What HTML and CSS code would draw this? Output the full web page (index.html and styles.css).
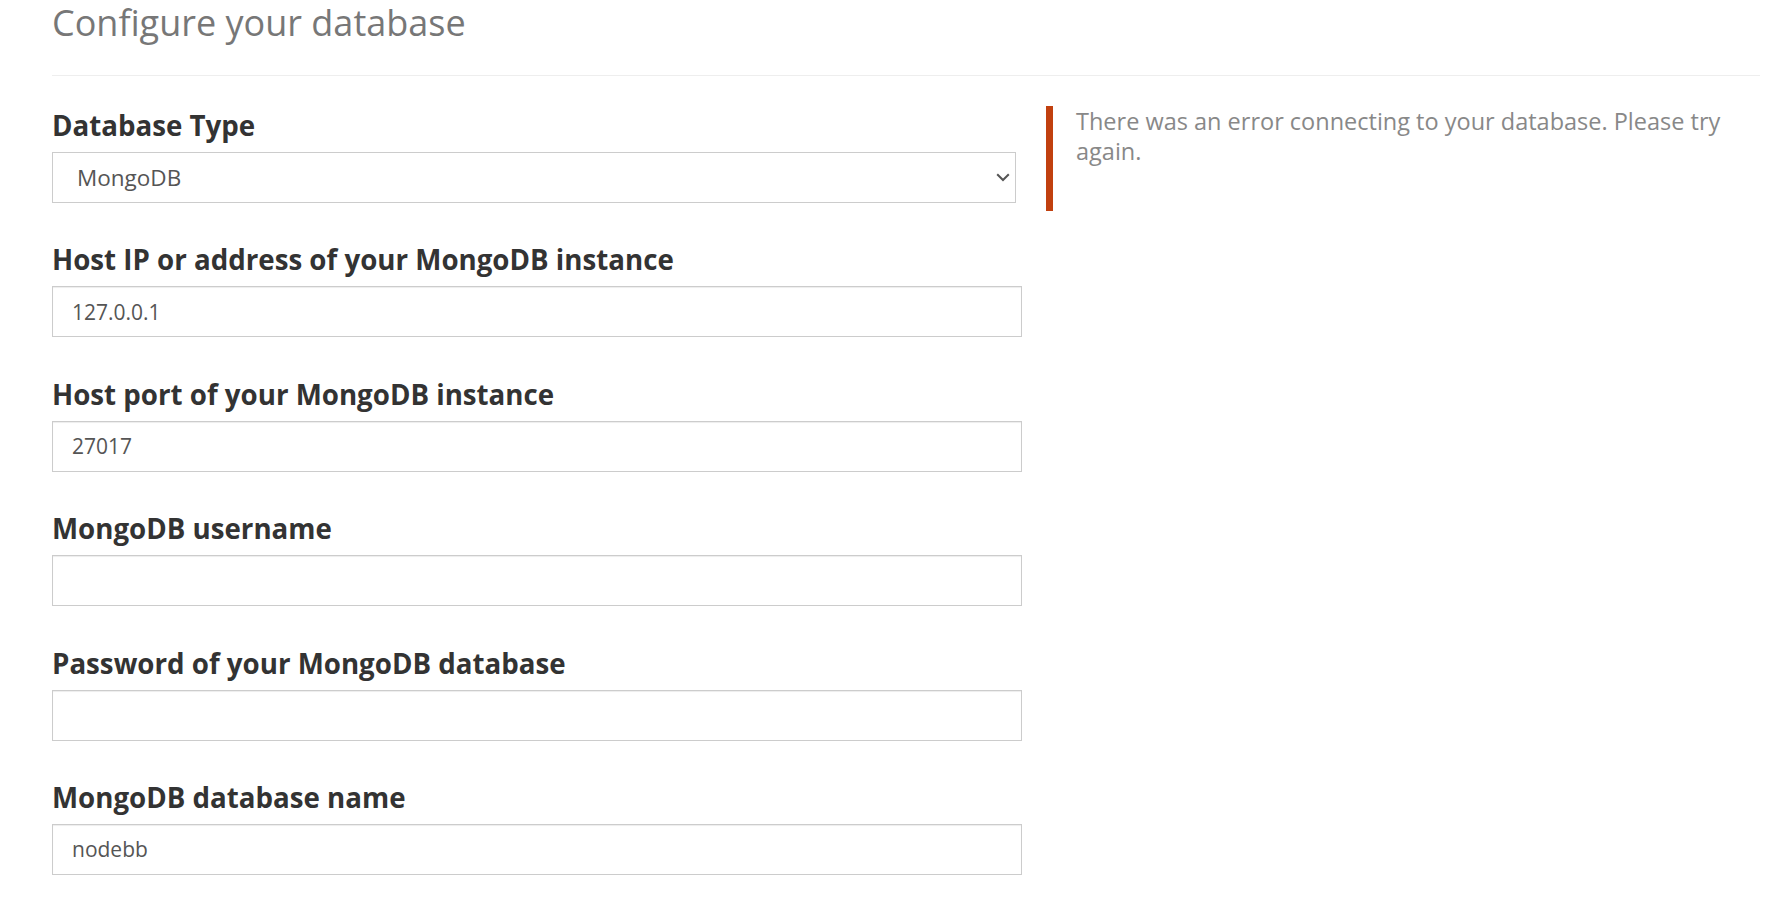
FILE: index.html
```html
<!DOCTYPE html>
<html lang="en">
<head>
<meta charset="utf-8">
<title>Configure your database</title>
<link rel="stylesheet" href="styles.css">
</head>
<body>
<div class="page">
  <h1 class="title">Configure your database</h1>
  <hr class="divider">
  <div class="layout">
    <form class="form">
      <div class="form-group">
        <label class="label" for="dbtype">Database Type</label>
        <div class="select-wrap">
          <select id="dbtype" class="control select">
            <option>MongoDB</option>
          </select>
          <svg class="chevron" width="14" height="9" viewBox="0 0 14 9" aria-hidden="true"><path d="M1.2 1.2 L7 7 L12.8 1.2" fill="none" stroke="#555" stroke-width="2"/></svg>
        </div>
      </div>
      <div class="form-group">
        <label class="label" for="host">Host IP or address of your MongoDB instance</label>
        <input id="host" class="control" type="text" value="127.0.0.1">
      </div>
      <div class="form-group">
        <label class="label" for="port">Host port of your MongoDB instance</label>
        <input id="port" class="control" type="text" value="27017">
      </div>
      <div class="form-group">
        <label class="label" for="user">MongoDB username</label>
        <input id="user" class="control" type="text" value="">
      </div>
      <div class="form-group">
        <label class="label" for="pass">Password of your MongoDB database</label>
        <input id="pass" class="control" type="password" value="">
      </div>
      <div class="form-group">
        <label class="label" for="dbname">MongoDB database name</label>
        <input id="dbname" class="control" type="text" value="nodebb">
      </div>
    </form>
    <aside class="side">
      <div class="error-note">There was an error connecting to your database. Please try again.</div>
    </aside>
  </div>
</div>
</body>
</html>
```
FILE: styles.css
```css
html, body {
  margin: 0;
  padding: 0;
  background: #fff;
}
body {
  font-family: "Open Sans", "Noto Sans", "Liberation Sans", sans-serif;
  color: #333;
}
.page {
  padding: 0 29px 0 52px;
}
.title {
  margin: 0;
  padding-top: 1px;
  font-size: 36px;
  line-height: 43px;
  font-weight: 400;
  color: #777;
}
.divider {
  margin: 31px 0 0;
  border: 0;
  border-top: 1px solid #eee;
  height: 0;
}
.layout {
  display: grid;
  grid-template-columns: 970px 1fr;
  column-gap: 24px;
  padding-top: 30px;
}
.form {
  margin: 0;
  padding-top: 2px;
  display: flex;
  flex-direction: column;
  gap: 39.4px;
}
.form-group {
  display: flex;
  flex-direction: column;
}
.label {
  display: block;
  font-size: 27.7px;
  line-height: 34px;
  font-weight: 700;
  color: #333;
  margin-bottom: 10px;
}
.control {
  display: block;
  box-sizing: border-box;
  width: 100%;
  height: 51px;
  margin: 0;
  padding: 0 19px;
  border: 1px solid #ccc;
  border-radius: 0;
  background: #fff;
  box-shadow: inset 0 1px 1px rgba(0,0,0,.075);
  font-family: inherit;
  font-size: 21px;
  color: #555;
  outline: none;
}
.select-wrap {
  position: relative;
  width: calc(100% - 6px);
}
.select {
  appearance: none;
  -webkit-appearance: none;
  padding-left: 24px;
  font-size: 22.5px;
  box-shadow: none;
}
.chevron {
  position: absolute;
  right: 6px;
  top: 21px;
}
.side {
  padding-top: 0;
}
.error-note {
  border-left: 7px solid #c1400f;
  padding: 0 0 45px 23px;
  font-size: 23.5px;
  line-height: 30px;
  color: #888;
  max-width: 690px;
}
```
